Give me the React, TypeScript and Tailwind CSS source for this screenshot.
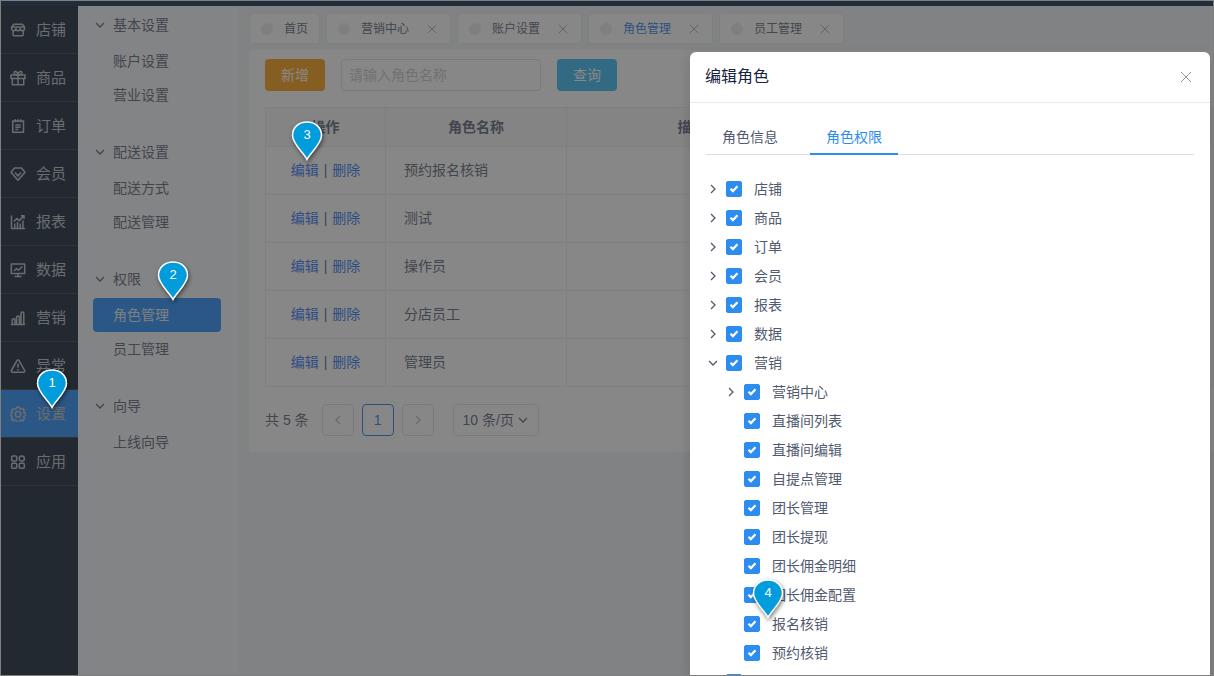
import React, { useState } from 'react';

interface MenuEntry {
  label: string;
  icon: React.ReactNode;
}

interface MenuGroup {
  title: string;
  items: string[];
}

interface TreeNode {
  label: string;
  level: number;
  arrow?: 'right' | 'down';
}

const mainMenu: MenuEntry[] = [
  {
    label: '店铺',
    icon: (
      <>
        <path d="M4 2.2h8.200L14.500 5v1.500a2.100 2.100 0 0 1-4.300 0 2.100 2.100 0 0 1-4.300 0 2.100 2.100 0 0 1-4.300 0V5z" />
        <path d="M1.800 5h12.500M3 9v3.700a1 1 0 0 0 1 1h8.200a1 1 0 0 0 1-1V9" />
      </>
    ),
  },
  {
    label: '商品',
    icon: (
      <>
        <path d="M1 5h14v3.500H1zM2.300 8.500v6.300h11.400V8.500M8 5v9.800" />
        <path d="M8 5C6 5 4 4.500 4 2.800 4 .8 7.500.8 8 5zM8 5c2 0 4-.5 4-2.200 0-2-3.500-2-4 2.200z" />
      </>
    ),
  },
  {
    label: '订单',
    icon: (
      <>
        <path d="M2.700 3h10.800v11.300H2.700zM5.300 1.300v3M8 1.300v3M10.800 1.300v3" />
        <path d="M5.300 7h5.400M5.300 9.300h5.400M5.300 11.600h3" />
      </>
    ),
  },
  {
    label: '会员',
    icon: (
      <>
        <path d="M4.500 2h7L15 6.300 8 14.300 1 6.300z" />
        <path d="M5 6.500l3 3.500 3-3.500" />
      </>
    ),
  },
  {
    label: '报表',
    icon: (
      <>
        <path d="M1.500 1.500v13H15M4.700 14V9.500M7.500 14V8M10.300 14V9.500M13 14V6.500" />
        <path d="M4 7.500l3-3 2.300 2.300L13.500 2M14 5V1.700h-3" />
      </>
    ),
  },
  {
    label: '数据',
    icon: (
      <>
        <path d="M1.300 2h13.400v9.500H1.300zM8 11.500v3M4.500 14.500h7" />
        <path d="M4 9l2.500-2.500L8.500 8.300 12.300 4.500" />
      </>
    ),
  },
  {
    label: '营销',
    icon: (
      <path d="M1 14.500h14M2.300 14.500V9.700c0-1.400 2.700-1.400 2.700 0v4.800M6.600 14.500V7c0-1.400 2.800-1.400 2.800 0v7.500M11 14.500V3c0-1.400 2.800-1.400 2.800 0v11.500" />
    ),
  },
  {
    label: '异常',
    icon: <path d="M6.900 2.600a1.300 1.300 0 0 1 2.200 0l5.500 9.900a1.200 1.200 0 0 1-1.100 1.800h-11a1.200 1.200 0 0 1-1.100-1.800zM8 5.500v4.300M8 11v1.400" />,
  },
  {
    label: '设置',
    icon: (
      <>
        <path d="M6.700 1h2.600l.5 1.900 1.100.5 1.700-1 1.900 1.900-1 1.700.5 1.100 1.900.5v1.900l-1.900.6-.5 1.200 1 1.700-1.900 1.900-1.700-1-1.100.5-.5 1.900H6.700l-.5-1.900-1.200-.5-1.700 1-1.800-1.900 1-1.700-.5-1.200L.8 9.500V7.600L2 7.100 2.500 6l-1-1.700 1.800-1.900 1.700 1 1.200-.5z" />
        <circle cx="8" cy="8.200" r="2.700" />
      </>
    ),
  },
  {
    label: '应用',
    icon: (
      <>
        <rect x="1.700" y="2" width="5" height="5" rx="1" />
        <rect x="1.700" y="9.300" width="5" height="5" rx="1" />
        <rect x="9.300" y="9.300" width="5" height="5" rx="1" />
        <circle cx="11.800" cy="4.500" r="2.600" />
      </>
    ),
  },
];

const subMenu: MenuGroup[] = [
  { title: '基本设置', items: ['账户设置', '营业设置'] },
  { title: '配送设置', items: ['配送方式', '配送管理'] },
  { title: '权限', items: ['角色管理', '员工管理'] },
  { title: '向导', items: ['上线向导'] },
];

const pageTabs = ['首页', '营销中心', '账户设置', '角色管理', '员工管理'];

const roles = ['预约报名核销', '测试', '操作员', '分店员工', '管理员'];

const permissions: TreeNode[] = [
  { label: '店铺', level: 0, arrow: 'right' },
  { label: '商品', level: 0, arrow: 'right' },
  { label: '订单', level: 0, arrow: 'right' },
  { label: '会员', level: 0, arrow: 'right' },
  { label: '报表', level: 0, arrow: 'right' },
  { label: '数据', level: 0, arrow: 'right' },
  { label: '营销', level: 0, arrow: 'down' },
  { label: '营销中心', level: 1, arrow: 'right' },
  { label: '直播间列表', level: 1 },
  { label: '直播间编辑', level: 1 },
  { label: '自提点管理', level: 1 },
  { label: '团长管理', level: 1 },
  { label: '团长提现', level: 1 },
  { label: '团长佣金明细', level: 1 },
  { label: '团长佣金配置', level: 1 },
  { label: '报名核销', level: 1 },
  { label: '预约核销', level: 1 },
  { label: '', level: 0, arrow: 'right' },
];

const arrowPaths = {
  right: 'M4 2l4 4-4 4',
  left: 'M8 2L4 6l4 4',
  down: 'M2 4l4 4 4-4',
};

function Arrow({ dir }: { dir: 'right' | 'left' | 'down' }) {
  return (
    <svg viewBox="0 0 12 12" className="h-3 w-3 shrink-0" fill="none" stroke="currentColor" strokeWidth="1.3">
      <path d={arrowPaths[dir]} />
    </svg>
  );
}

function Cross({ className }: { className: string }) {
  return (
    <svg viewBox="0 0 12 12" className={className} fill="none" stroke="currentColor" strokeWidth="1">
      <path d="M1 1l10 10M11 1L1 11" />
    </svg>
  );
}

// Numbered step marker, the tip points at the step's target
function Pin({ step, className }: { step: number; className: string }) {
  return (
    <div className={`absolute z-30 h-10 w-8 ${className}`}>
      <svg viewBox="0 0 32 40" className="h-10 w-8 drop-shadow-[1px_2px_2px_rgba(0,0,0,0.5)]">
        <path
          d="M16 38.500C13 32 1.500 23 1.500 14.500 1.500 6 8 1 16 1s14.500 5 14.500 13.500C30.500 23 19 32 16 38.500z"
          fill="#009cdb"
          stroke="#fff"
          strokeWidth="1.500"
        />
      </svg>
      <span className="absolute inset-x-0 top-1.5 text-center text-[13px] leading-4 text-white">{step}</span>
    </div>
  );
}

function MainMenu() {
  return (
    <nav className="w-[77px] shrink-0 bg-[#03162a]">
      {mainMenu.map((entry) => (
        <a
          key={entry.label}
          href="#"
          className={`flex h-12 items-center gap-2.5 border-b border-[#2d2d2d] pt-px pl-[9px] text-[15px] text-[#b8bcc0] ${
            entry.label === '设置' ? 'bg-[#1a88ff]' : ''
          }`}
        >
          <svg
            viewBox="0 0 16 16"
            className="h-4 w-4 shrink-0"
            fill="none"
            stroke="currentColor"
            strokeWidth="1.5"
            strokeLinejoin="round"
          >
            {entry.icon}
          </svg>
          {entry.label}
        </a>
      ))}
    </nav>
  );
}

function SubMenu() {
  return (
    <nav className="flex w-40 shrink-0 flex-col gap-[21px] bg-[#f5f8fa] px-[15px] text-sm text-[#515a6e]">
      {subMenu.map((group) => (
        <div key={group.title}>
          <button type="button" className="flex h-[38px] w-full items-center gap-[7px] pl-px">
            <Arrow dir="down" />
            {group.title}
          </button>
          {group.items.map((item) => (
            <a
              key={item}
              href="#"
              className={`mr-0.5 flex h-[34px] items-center rounded pl-5 ${
                item === '角色管理' ? 'bg-[#1a88ff] text-[#e8eaec]' : ''
              }`}
            >
              {item}
            </a>
          ))}
        </div>
      ))}
    </nav>
  );
}

function RoleList() {
  const [keyword, setKeyword] = useState('');

  return (
    <main className="min-w-0 flex-1 bg-[#eff2f5] pl-[11px]">
      <div className="flex gap-1.5 pt-[7px]">
        {pageTabs.map((tab) => (
          <div
            key={tab}
            className={`flex h-[31px] items-center gap-[11px] rounded-[3px] border border-[#e8eaec] bg-white px-[11px] text-xs ${
              tab === '角色管理' ? 'text-[#1a78f0]' : 'text-[#515a6e]'
            }`}
          >
            <span className="h-3 w-3 rounded-full bg-[#e8eaec]" />
            <a href="#">{tab}</a>
            {tab !== '首页' && (
              <button type="button" aria-label={`关闭${tab}`} className="ml-[5px] flex w-3.5 justify-center text-[#999]">
                <Cross className="h-2.5 w-2.5" />
              </button>
            )}
          </div>
        ))}
      </div>

      <section className="mt-1.5 rounded bg-white py-[9px] pl-4 text-sm text-[#515a6e]">
        <form className="flex gap-4" onSubmit={(e) => e.preventDefault()}>
          <button type="button" className="h-8 w-[60px] rounded bg-[#ff9900] text-white">
            新增
          </button>
          <input
            type="text"
            aria-label="角色名称"
            placeholder="请输入角色名称"
            value={keyword}
            onChange={(e) => setKeyword(e.target.value)}
            className="h-8 w-[200px] rounded border border-[#dcdee2] px-[7px] placeholder:text-[#c5c8ce]"
          />
          <button type="submit" className="h-8 w-[60px] rounded bg-[#2db7f5] text-white">
            查询
          </button>
        </form>

        <table className="mt-4 w-full table-fixed border-collapse border border-[#dcdee2]">
          <colgroup>
            <col className="w-[120px]" />
            <col className="w-[181px]" />
            <col className="w-[250px]" />
            <col />
          </colgroup>
          <thead>
            <tr className="h-[39px] bg-[#f8f8f9]">
              <th className="border border-[#e8eaec]">操作</th>
              <th className="border border-[#e8eaec]">角色名称</th>
              <th className="border border-[#e8eaec]">描述</th>
              <td className="border border-[#e8eaec]" />
            </tr>
          </thead>
          <tbody>
            {roles.map((role) => (
              <tr key={role} className="h-12">
                <td className="border border-[#e8eaec] pb-0.5 text-center">
                  <a href="#" className="text-[#1a6ff5]">编辑</a>
                  <span className="mx-[5px]">|</span>
                  <a href="#" className="text-[#1a6ff5]">删除</a>
                </td>
                <td className="border border-[#e8eaec] pb-0.5 pl-[18px]">{role}</td>
                <td className="border border-[#e8eaec]" />
                <td className="border border-[#e8eaec]" />
              </tr>
            ))}
          </tbody>
        </table>

        <div className="mt-[17px] mb-[7px] flex items-center">
          <span className="mr-[13px]">共 5 条</span>
          <div className="flex gap-2">
            <button type="button" aria-label="上一页" className="flex h-8 w-8 items-center justify-center rounded border border-[#dcdee2] text-[#b5b8be]">
              <Arrow dir="left" />
            </button>
            <button type="button" className="h-8 w-8 rounded border border-[#1a78f0] text-[#1a78f0]">
              1
            </button>
            <button type="button" aria-label="下一页" className="flex h-8 w-8 items-center justify-center rounded border border-[#dcdee2] text-[#b5b8be]">
              <Arrow dir="right" />
            </button>
          </div>
          <div className="relative ml-[19px]">
            <select aria-label="每页条数" className="h-8 w-[86px] appearance-none rounded border border-[#dcdee2] pl-[9px]">
              <option>10 条/页</option>
              <option>20 条/页</option>
            </select>
            <span className="pointer-events-none absolute top-2.5 right-2.5">
              <Arrow dir="down" />
            </span>
          </div>
        </div>
      </section>
    </main>
  );
}

function PermissionRow({ node }: { node: TreeNode }) {
  const [checked, setChecked] = useState(true);

  return (
    <li className={`flex h-[29px] items-center ${node.level === 1 ? 'pl-[18px]' : ''}`}>
      <button type="button" aria-label={`展开${node.label}`} className="mr-[7px] flex h-3 w-[13px] justify-center">
        {node.arrow && <Arrow dir={node.arrow} />}
      </button>
      <label className="flex items-center gap-3">
        <span className="relative flex h-4 w-4">
          <input
            type="checkbox"
            checked={checked}
            onChange={() => setChecked(!checked)}
            className="peer h-4 w-4 appearance-none rounded-xs border border-[#dcdee2] checked:border-[#2d8cf0] checked:bg-[#2d8cf0]"
          />
          <svg
            viewBox="0 0 16 16"
            className="pointer-events-none absolute inset-0 hidden h-4 w-4 peer-checked:block"
            fill="none"
            stroke="#fff"
            strokeWidth="2.2"
          >
            <path d="M4.500 7.700l2.400 2.400 4.600-4.800" />
          </svg>
        </span>
        {node.label}
      </label>
    </li>
  );
}

function RoleDrawer() {
  return (
    <aside
      role="dialog"
      aria-label="编辑角色"
      className="absolute top-[51px] right-[3px] bottom-0 z-20 w-[520px] overflow-hidden rounded-t-md bg-white text-sm text-[#515a6e] shadow-[0_4px_12px_rgba(0,0,0,0.15)]"
    >
      <header className="flex h-[51px] items-center justify-between border-b border-[#e8eaec] pr-[18px] pl-[15px]">
        <h2 className="text-base text-[#17233d]">编辑角色</h2>
        <button type="button" aria-label="关闭" className="text-[#999]">
          <Cross className="h-3 w-3" />
        </button>
      </header>
      <div className="px-4 pt-4">
        <div role="tablist" className="flex h-9 gap-4 border-b border-[#dcdee2]">
          <button type="button" role="tab" className="h-9 border-y-2 border-transparent px-4">
            角色信息
          </button>
          <button
            type="button"
            role="tab"
            aria-selected="true"
            className="h-9 border-y-2 border-transparent border-b-[#2d8cf0] px-4 text-[#2d8cf0]"
          >
            角色权限
          </button>
        </div>
        <ul className="pt-[19px]">
          {permissions.map((node, index) => (
            <PermissionRow key={index} node={node} />
          ))}
        </ul>
      </div>
    </aside>
  );
}

export default function App() {
  return (
    <div className="relative flex h-screen flex-col overflow-hidden border border-[#7f7f7f] font-['Liberation_Sans','Noto_Sans_CJK_SC',sans-serif]">
      <div className="h-[5px] shrink-0 bg-[#001f42]" />
      <div className="flex min-h-0 flex-1">
        <MainMenu />
        <SubMenu />
        <RoleList />
      </div>

      <div className="absolute inset-0 z-10 bg-[rgba(55,55,55,0.6)]" />
      <RoleDrawer />

      <Pin step={1} className="top-[368px] left-[35px]" />
      <Pin step={2} className="top-[260px] left-[156px]" />
      <Pin step={3} className="top-[120px] left-[290px]" />
      <Pin step={4} className="top-[578px] left-[751px]" />
    </div>
  );
}
